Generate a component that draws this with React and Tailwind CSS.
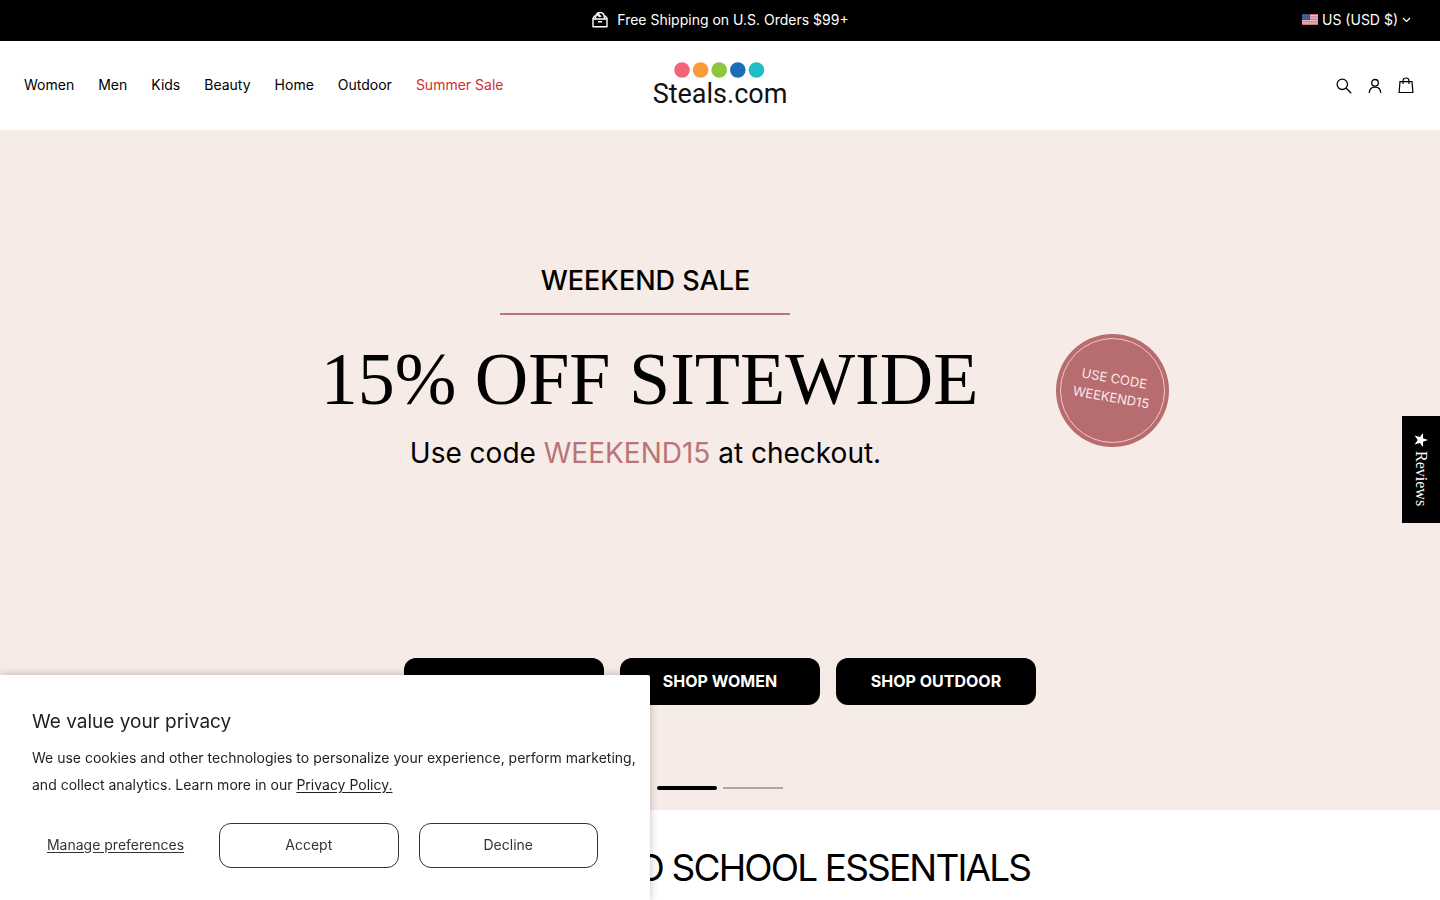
import React from 'react';

const navLinks = ['Women', 'Men', 'Kids', 'Beauty', 'Home', 'Outdoor'];
const shopLinks = ['SHOP MEN', 'SHOP WOMEN', 'SHOP OUTDOOR'];
const logoColors = ['#f26578', '#f99a38', '#8dc63f', '#1c6bb5', '#1dbfc4'];

function BoxIcon() {
  return (
    <svg width="18" height="18" viewBox="0 0 18 18" fill="none" stroke="currentColor" strokeWidth="1.4" aria-hidden="true">
      <path d="M2 7v8.7h14V7l-2.600-2.500M2 7l2.400-2.500" strokeLinejoin="round" />
      <path d="M2 8h14M7 10.700h4" />
      <path d="M4.500 7.500C4.500 3.500 6 1.500 9 1.500s4.500 2 4.500 6" />
      <path d="M5.500 3.800l2.200-2 1 2.400 1.800 1-2 .8-1.500-1z" fill="currentColor" strokeWidth="0.6" />
    </svg>
  );
}

function FlagIcon() {
  return (
    <svg width="16" height="11" viewBox="0 0 16 11" aria-hidden="true">
      <path d="M0 0h16v11H0z" fill="#f3dfe0" />
      <path d="M0 .5h16M0 2.2h16M0 3.9h16M0 5.6h16M0 7.3h16M0 9h16M0 10.6h16" stroke="#c4606b" strokeWidth=".9" />
      <path d="M0 0h8v6H0z" fill="#3c4f85" />
      <path d="M1 1.5h6M1 3h6M1 4.5h6" stroke="#8391b8" strokeWidth=".6" strokeDasharray=".8 .8" />
    </svg>
  );
}

function SearchIcon() {
  return (
    <svg width="16" height="16" viewBox="0 0 16 16" fill="none" stroke="currentColor" strokeWidth="1.3" aria-hidden="true">
      <circle cx="6.3" cy="6.3" r="5.2" />
      <path d="M10 10l5.2 5.2" />
    </svg>
  );
}

function AccountIcon() {
  return (
    <svg width="14" height="16" viewBox="0 0 14 16" fill="none" stroke="currentColor" strokeWidth="1.3" aria-hidden="true">
      <circle cx="7" cy="4.8" r="3.3" />
      <path d="M1.2 15c.3-3.9 2.6-5.8 5.8-5.8s5.5 1.9 5.8 5.8" />
    </svg>
  );
}

function BagIcon() {
  return (
    <svg width="16" height="17" viewBox="0 0 16 17" fill="none" stroke="currentColor" strokeWidth="1.2" aria-hidden="true">
      <path d="M2 4.6h12l.9 10.9H1.1z" />
      <path d="M5 7V4c0-1.900 1.200-3 3-3s3 1.100 3 3v3" />
    </svg>
  );
}

function AnnouncementBar() {
  return (
    <div className="grid h-[41px] grid-cols-[1fr_auto_1fr] items-center bg-black pb-0.5 text-sm text-white">
      <span />
      <p className="flex items-center gap-2">
        <BoxIcon />
        Free Shipping on U.S. Orders $99+
      </p>
      <label className="mr-[29px] flex items-center gap-1 justify-self-end">
        <FlagIcon />
        <select aria-label="Country and currency" className="field-sizing-content appearance-none bg-black">
          <option>US (USD $)</option>
        </select>
        <svg width="9" height="6" viewBox="0 0 9 6" fill="none" stroke="currentColor" strokeWidth="1.2" aria-hidden="true">
          <path d="M1 1l3.5 3.5L8 1" />
        </svg>
      </label>
    </div>
  );
}

function Header() {
  return (
    <header className="grid h-[89px] grid-cols-[1fr_auto_1fr] items-center bg-white px-6">
      <nav className="flex gap-6 pb-0.5 text-sm">
        {navLinks.map((link) => (
          <a key={link} href="#" className="hover:underline">
            {link}
          </a>
        ))}
        <a href="#" className="text-[#d0302f] hover:underline">
          Summer Sale
        </a>
      </nav>
      <a href="#" className="flex flex-col items-center">
        <svg width="91" height="16" viewBox="0 0 91 16" aria-hidden="true">
          {logoColors.map((color, i) => (
            <circle key={color} cx={8 + i * 18.6} cy="8" r="7.8" fill={color} />
          ))}
        </svg>
        <span className="font-[Roboto,sans-serif] text-[27px] leading-8 text-[#111111]">Steals.com</span>
      </a>
      <div className="flex items-center gap-4 justify-self-end pr-0.5">
        <button aria-label="Search"><SearchIcon /></button>
        <button aria-label="Account"><AccountIcon /></button>
        <button aria-label="Cart"><BagIcon /></button>
      </div>
    </header>
  );
}

function Hero() {
  return (
    <section className="flex h-[680px] flex-col items-center bg-[#f6ebe7]">
      <div className="ml-[42px] flex flex-1 items-center gap-[78px] pb-14">
        <div className="flex flex-col items-center">
          <p className="text-[27px] leading-10 font-medium">WEEKEND SALE</p>
          <div className="mt-3 h-0.5 w-[290px] bg-[#b97478]" />
          <h1 className="mt-5 ml-2 font-['Liberation_Serif',serif] text-[74px] leading-[88px]">15% OFF SITEWIDE</h1>
          <p className="mt-3 text-[28px] leading-9">
            Use code <span className="text-[#b97478]">WEEKEND15</span> at checkout.
          </p>
        </div>
        <div className="mt-12 flex size-[113px] items-center justify-center rounded-full bg-[#b76c70] p-1">
          <div className="flex size-full items-center justify-center rounded-full border border-[#f4c9c6] pb-1">
            <p className="rotate-10 text-center text-[13px] leading-[19px] text-[#fbe9e6]">
              USE CODE
              <br />
              WEEKEND15
            </p>
          </div>
        </div>
      </div>
      <div className="flex gap-4">
        {shopLinks.map((label) => (
          <a key={label} href="#" className="flex h-[47px] w-[200px] items-center justify-center rounded-xl bg-black pb-0.5 text-base font-bold text-white">
            {label}
          </a>
        ))}
      </div>
      <div className="mt-[81px] mb-5 flex items-center gap-1.5">
        <button aria-label="Slide 1" className="h-1 w-[60px] rounded-full bg-black" />
        <button aria-label="Slide 2" className="h-0.5 w-[60px] bg-[#b1a6a3]" />
      </div>
    </section>
  );
}

function ReviewsTab() {
  return (
    <button className="fixed top-[416px] right-0 flex h-[107px] w-[38px] items-center justify-center gap-1 bg-black font-['Liberation_Serif',serif] text-base text-white [writing-mode:vertical-rl]">
      <svg width="14" height="14" viewBox="0 0 24 24" fill="currentColor" className="rotate-90" aria-hidden="true">
        <path d="M12 0l3.2 8.5H24l-7 5.5 2.7 9L12 17.6 4.3 23 7 14 0 8.5h8.8z" />
      </svg>
      Reviews
    </button>
  );
}

function CookieBanner() {
  return (
    <div role="dialog" aria-labelledby="privacy-title" className="fixed bottom-0 left-0 h-[225px] w-[650px] rounded-tr-xs bg-white pt-[33px] pr-3 pl-8 text-sm text-[#1f1f1f] shadow-[0_0_8px_rgba(0,0,0,0.25)]">
      <h2 id="privacy-title" className="text-[19px] leading-7">We value your privacy</h2>
      <p className="mt-2 leading-[27px]">
        We use cookies and other technologies to personalize your experience, perform marketing, and collect analytics. Learn more in our{' '}
        <a href="#" className="underline underline-offset-2">Privacy Policy.</a>
      </p>
      <div className="mt-[25px] flex items-center gap-5 pr-10">
        <button className="w-[167px] pb-0.5 text-[#333333] underline underline-offset-2">Manage preferences</button>
        <button className="h-[45px] flex-1 rounded-xl border border-[#333333] pb-0.5 text-[#333333]">Accept</button>
        <button className="h-[45px] flex-1 rounded-xl border border-[#333333] pb-0.5 text-[#333333]">Decline</button>
      </div>
    </div>
  );
}

export default function App() {
  return (
    <div className="h-screen overflow-hidden bg-white font-['Inter',sans-serif] text-black">
      <AnnouncementBar />
      <Header />
      <main>
        <Hero />
        <h2 className="pt-8 text-center text-[37px] leading-[52px] tracking-tighter">SHOP BACK TO SCHOOL ESSENTIALS</h2>
      </main>
      <ReviewsTab />
      <CookieBanner />
    </div>
  );
}
